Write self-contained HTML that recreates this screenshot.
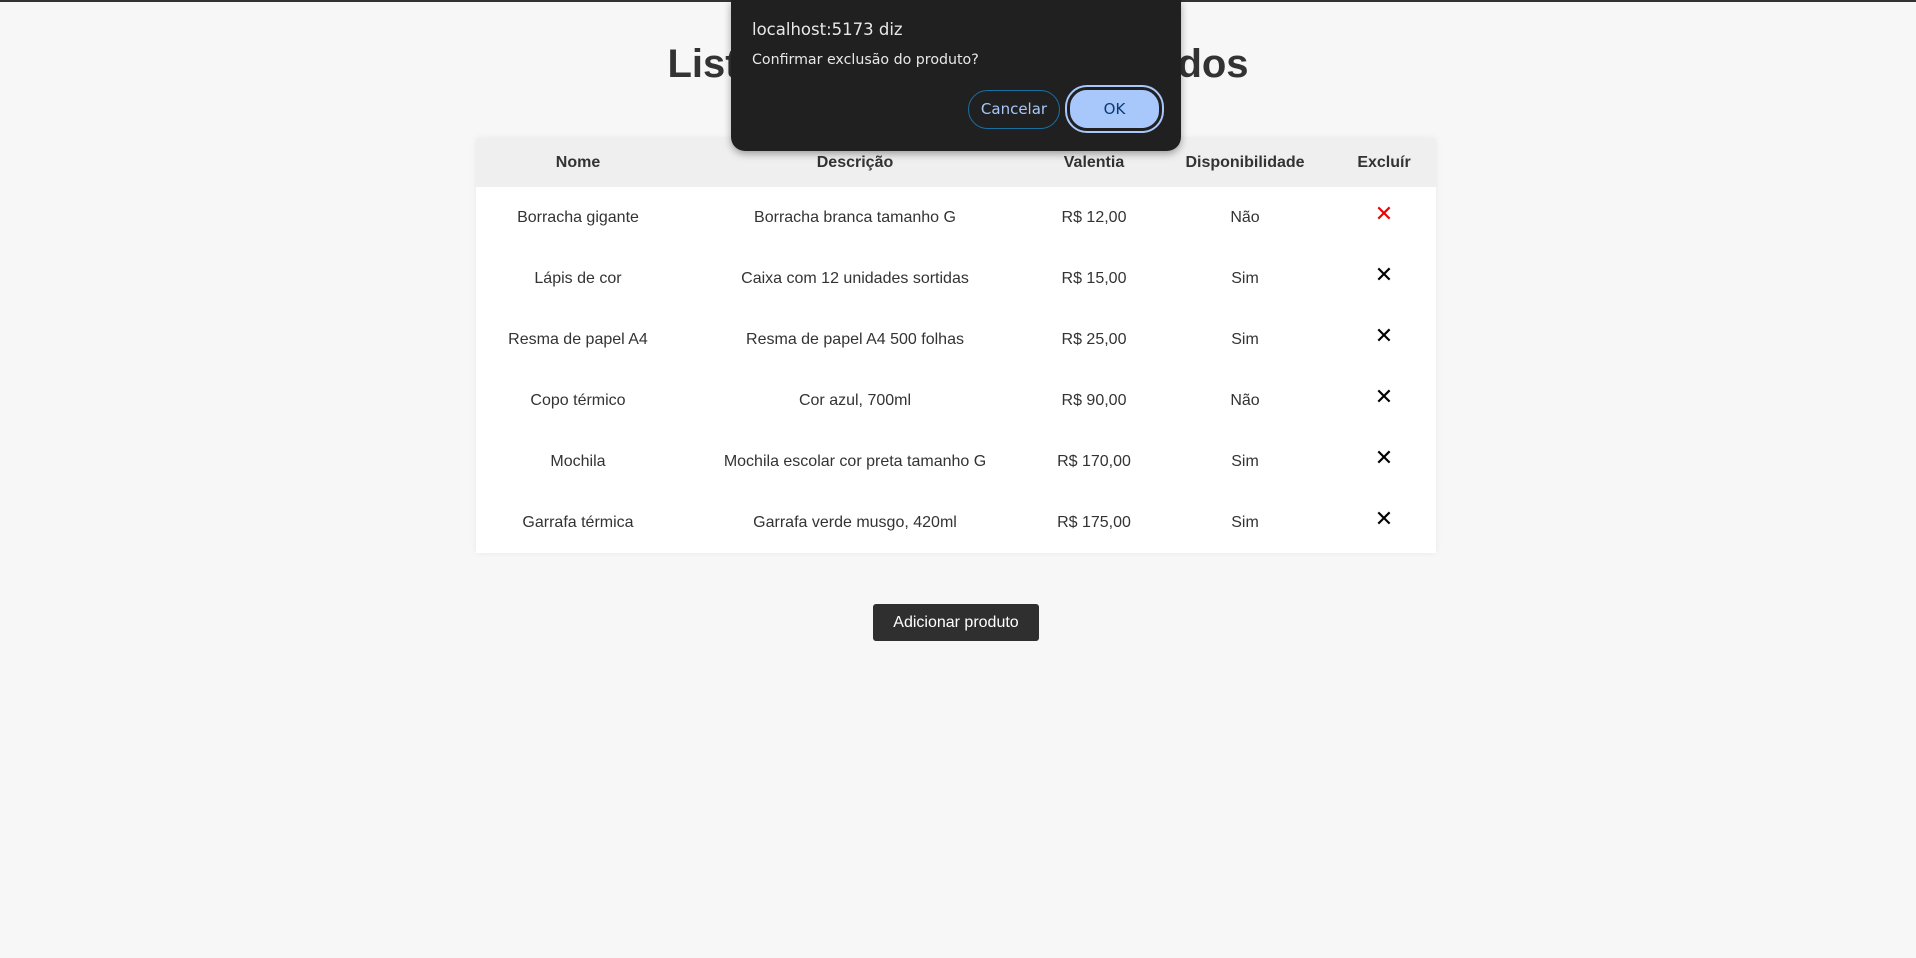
<!DOCTYPE html>
<html><head><meta charset="utf-8"><style>
html,body{margin:0;padding:0;}
body{width:1916px;height:958px;background:#f7f7f7;font-family:"Liberation Sans",Arial,sans-serif;color:#333;position:relative;overflow:hidden;border-top:2px solid #333;box-sizing:border-box;}
h1{position:absolute;top:39px;left:0;width:1916px;text-align:center;margin:0;font-size:40px;font-weight:bold;color:#333;line-height:46px;letter-spacing:-0.05px;}
table{position:absolute;left:476px;top:136px;width:960px;border-collapse:collapse;background:#fff;box-shadow:0 0 6px rgba(0,0,0,0.06);table-layout:fixed;font-size:16px;}
th{background:#efefef;height:49px;font-weight:bold;padding:0;}
td{height:61px;text-align:center;padding:0;color:#333;}
.x{font-size:22px;color:#000;font-family:"DejaVu Sans",sans-serif;position:relative;top:-3px;}
.x.r{color:#e00;}
.btn{position:absolute;left:873px;top:602px;width:166px;height:37px;background:#2f2f2f;color:#fff;border-radius:3px;font-size:16px;line-height:37px;text-align:center;}
.dlg{position:absolute;left:731px;top:-2px;width:450px;height:151px;background:#202020;border-radius:0 0 14px 14px;box-shadow:0 3px 8px rgba(0,0,0,0.35);font-family:"DejaVu Sans",sans-serif;color:#e8e8e8;}
.t1{position:absolute;left:21px;top:20px;font-size:16.5px;}
.t2{position:absolute;left:21px;top:52px;font-size:14.2px;}
.b{position:absolute;border-radius:20px;font-size:15px;text-align:center;box-sizing:border-box;}
.c{left:237px;top:90px;width:92px;height:39px;border:1px solid #1a6fa0;color:#a8c7fa;line-height:37px;}
.ok{left:336px;top:87px;width:95px;height:44px;background:#a8c7fa;color:#0b3a78;line-height:38px;border:3px solid #202020;box-shadow:0 0 0 2px #a8c7fa;}
</style></head><body>
<h1>Lista de produtos cadastrados</h1>
<table>
<colgroup><col style="width:204px"><col style="width:350px"><col style="width:128px"><col style="width:174px"><col style="width:104px"></colgroup>
<tr><th>Nome</th><th>Descrição</th><th>Valentia</th><th>Disponibilidade</th><th>Excluír</th></tr>
<tr><td>Borracha gigante</td><td>Borracha branca tamanho G</td><td>R$ 12,00</td><td>Não</td><td><span class="x r">✕</span></td></tr>
<tr><td>Lápis de cor</td><td>Caixa com 12 unidades sortidas</td><td>R$ 15,00</td><td>Sim</td><td><span class="x">✕</span></td></tr>
<tr><td>Resma de papel A4</td><td>Resma de papel A4 500 folhas</td><td>R$ 25,00</td><td>Sim</td><td><span class="x">✕</span></td></tr>
<tr><td>Copo térmico</td><td>Cor azul, 700ml</td><td>R$ 90,00</td><td>Não</td><td><span class="x">✕</span></td></tr>
<tr><td>Mochila</td><td>Mochila escolar cor preta tamanho G</td><td>R$ 170,00</td><td>Sim</td><td><span class="x">✕</span></td></tr>
<tr><td>Garrafa térmica</td><td>Garrafa verde musgo, 420ml</td><td>R$ 175,00</td><td>Sim</td><td><span class="x">✕</span></td></tr>
</table>
<div class="btn">Adicionar produto</div>
<div class="dlg">
<div class="t1">localhost:5173 diz</div>
<div class="t2">Confirmar exclusão do produto?</div>
<div class="b c">Cancelar</div>
<div class="b ok">OK</div>
</div>
</body></html>
